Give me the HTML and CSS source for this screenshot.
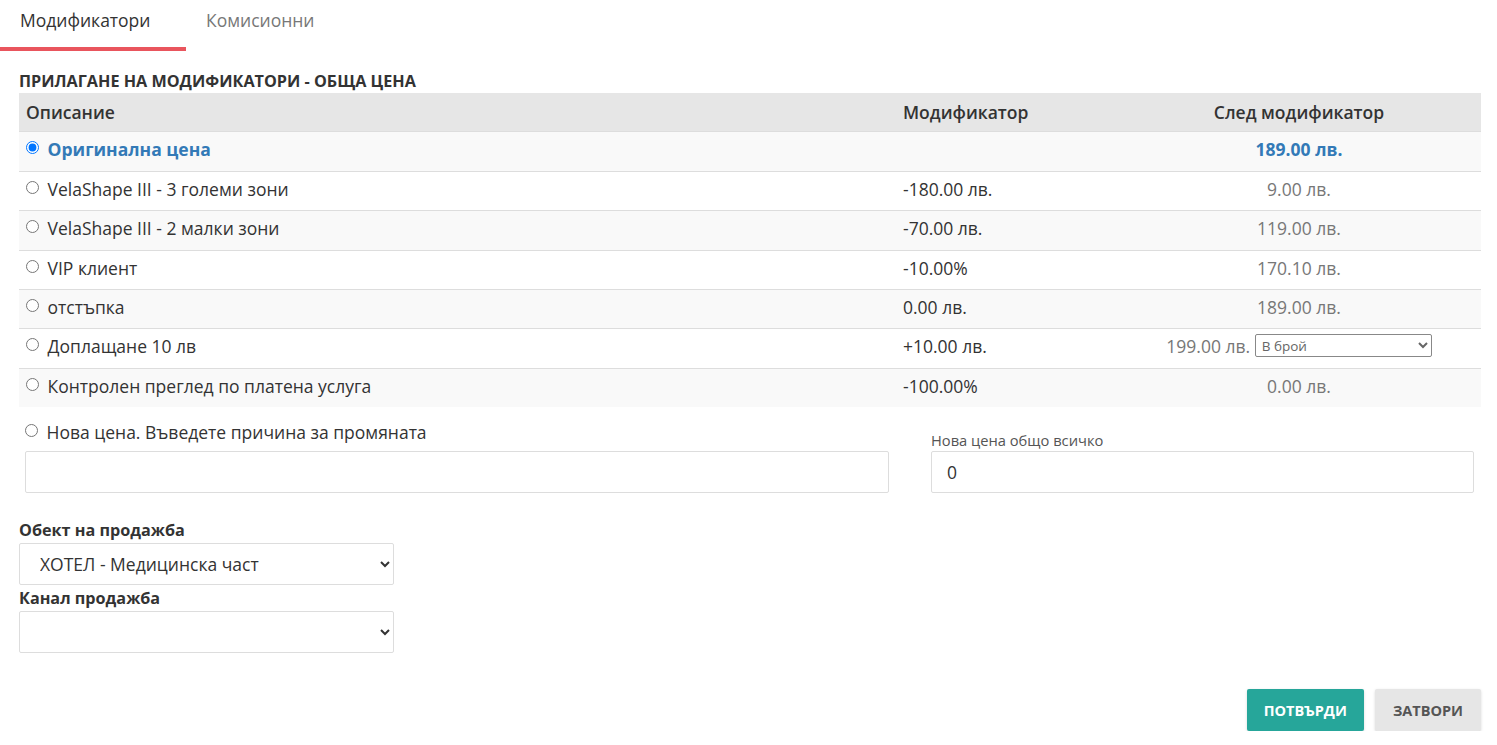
FILE: index.html
```html
<!DOCTYPE html>
<html lang="bg">
<head>
    <meta charset="UTF-8">
    <meta name="viewport" content="width=device-width, initial-scale=1.0">
    <title>Модификатори</title>
    <link rel="stylesheet" href="styles.css">
</head>
<body>
    <div class="tabs">
        <a class="tab active" href="#">Модификатори</a>
        <a class="tab" href="#">Комисионни</a>
    </div>

    <div class="content">
        <h4 class="section-title">ПРИЛАГАНЕ НА МОДИФИКАТОРИ - ОБЩА ЦЕНА</h4>

        <table class="mod-table">
            <thead>
                <tr>
                    <th class="col-desc">Описание</th>
                    <th class="col-mod">Модификатор</th>
                    <th class="col-after">След модификатор</th>
                </tr>
            </thead>
            <tbody>
                <tr class="selected">
                    <td><label><input type="radio" name="mod" checked> Оригинална цена</label></td>
                    <td></td>
                    <td class="col-after">189.00 лв.</td>
                </tr>
                <tr>
                    <td><label><input type="radio" name="mod"> VelaShape III - 3 големи зони</label></td>
                    <td>-180.00 лв.</td>
                    <td class="col-after">9.00 лв.</td>
                </tr>
                <tr>
                    <td><label><input type="radio" name="mod"> VelaShape III - 2 малки зони</label></td>
                    <td>-70.00 лв.</td>
                    <td class="col-after">119.00 лв.</td>
                </tr>
                <tr>
                    <td><label><input type="radio" name="mod"> VIP клиент</label></td>
                    <td>-10.00%</td>
                    <td class="col-after">170.10 лв.</td>
                </tr>
                <tr>
                    <td><label><input type="radio" name="mod"> отстъпка</label></td>
                    <td>0.00 лв.</td>
                    <td class="col-after">189.00 лв.</td>
                </tr>
                <tr>
                    <td><label><input type="radio" name="mod"> Доплащане 10 лв</label></td>
                    <td>+10.00 лв.</td>
                    <td class="col-after">199.00 лв. <select class="pay-select"><option>В брой</option></select></td>
                </tr>
                <tr>
                    <td><label><input type="radio" name="mod"> Контролен преглед по платена услуга</label></td>
                    <td>-100.00%</td>
                    <td class="col-after">0.00 лв.</td>
                </tr>
            </tbody>
        </table>

        <div class="new-price">
            <div class="new-price-left">
                <label class="radio-line"><input type="radio" name="mod"> Нова цена. Въведете причина за промяната</label>
                <input type="text" class="field">
            </div>
            <div class="new-price-right">
                <label class="small-label">Нова цена общо всичко</label>
                <input type="text" class="field" value="0">
            </div>
        </div>

        <div class="sale-fields">
            <label class="field-label">Обект на продажба</label>
            <select class="field-select"><option>ХОТЕЛ - Медицинска част</option></select>
            <label class="field-label">Канал продажба</label>
            <select class="field-select"><option></option></select>
        </div>

        <div class="actions">
            <button class="btn btn-confirm">ПОТВЪРДИ</button>
            <button class="btn btn-close">ЗАТВОРИ</button>
        </div>
    </div>
</body>
</html>
```

FILE: styles.css
```css
body {
    margin: 0;
    font-family: 'Open Sans', 'Noto Sans', sans-serif;
    font-size: 17.5px;
    color: #333;
    background-color: #fff;
}

.tabs {
    display: flex;
    height: 51px;
}

.tab {
    box-sizing: border-box;
    padding: 8px 20px 0 20px;
    font-size: 17.5px;
    color: #777;
    text-decoration: none;
    border-bottom: 4px solid transparent;
}

.tab.active {
    width: 186px;
    color: #333;
    border-bottom-color: #e9555d;
}

.content {
    padding: 0 16px 0 19px;
}

.section-title {
    margin: 18px 0 0 0;
    font-size: 16.2px;
    font-weight: 700;
    line-height: 24px;
    color: #333;
}

.mod-table {
    width: 100%;
    border-collapse: collapse;
}

.mod-table th,
.mod-table td {
    padding: 6px 7px 10px 7px;
    line-height: 22.4px;
    text-align: left;
    vertical-align: top;
}

.mod-table th {
    background-color: #e6e6e6;
    font-weight: 600;
    padding-top: 8px;
    padding-bottom: 8px;
}

.mod-table td {
    border-top: 1px solid #ddd;
}

.mod-table tbody tr:nth-child(odd) {
    background-color: #f9f9f9;
}

.mod-table .col-mod {
    width: 207px;
}

.mod-table .col-after {
    width: 350px;
    text-align: center;
    color: #777;
}

.mod-table th.col-after {
    color: #333;
}

.mod-table label input {
    margin: 0 4px 0 0;
    width: 13px;
    height: 13px;
    vertical-align: 2px;
}

.selected td,
.selected td.col-after {
    color: #337ab7;
    font-weight: 700;
}

.pay-select {
    width: 177px;
    height: 23px;
    padding: 0 2px;
    margin-top: -1px;
    font-family: 'Open Sans', sans-serif;
    font-size: 13.5px;
    color: #666;
    border: 1px solid #888;
    border-radius: 2px;
    background-color: #fff;
    vertical-align: top;
}

.new-price {
    display: grid;
    grid-template-columns: 1fr 543px;
    gap: 42px;
    align-items: end;
    padding: 13px 7px 0 6px;
}

.new-price-left,
.new-price-right {
    display: flex;
    flex-direction: column;
}

.radio-line {
    line-height: 24px;
    margin-bottom: 7px;
}

.radio-line input {
    margin: 0 4px 0 0;
    width: 13px;
    height: 13px;
    vertical-align: 2px;
}

.small-label {
    font-size: 14.7px;
    line-height: 20px;
    color: #555;
    margin-bottom: 1px;
}

.field {
    box-sizing: border-box;
    height: 42px;
    padding: 0 15px;
    border: 1px solid #ddd;
    border-radius: 2px;
    font-family: 'Open Sans', sans-serif;
    font-size: 17.5px;
    color: #333;
}

.sale-fields {
    display: flex;
    flex-direction: column;
    align-items: flex-start;
    margin-top: 26px;
}

.field-label {
    font-size: 16.2px;
    font-weight: 700;
    line-height: 22px;
    margin-bottom: 2px;
}

.field-select {
    box-sizing: border-box;
    width: 375px;
    height: 42px;
    padding: 0 8px 0 16px;
    border: 1px solid #ddd;
    border-radius: 2px;
    background-color: #fff;
    font-family: 'Open Sans', sans-serif;
    font-size: 17.5px;
    color: #333;
    margin-bottom: 2px;
}

.actions {
    display: flex;
    justify-content: flex-end;
    gap: 11px;
    margin-top: 34px;
}

.btn {
    height: 42px;
    padding: 0 17px;
    border: none;
    border-radius: 2px;
    font-family: 'Open Sans', sans-serif;
    font-size: 14.5px;
    font-weight: 700;
    cursor: pointer;
    box-shadow: 0 1px 3px rgba(0, 0, 0, 0.15);
}

.btn-confirm {
    background-color: #26a69a;
    color: #fff;
}

.btn-close {
    padding: 0 18px;
    background-color: #e6e6e6;
    color: #555;
}
```
